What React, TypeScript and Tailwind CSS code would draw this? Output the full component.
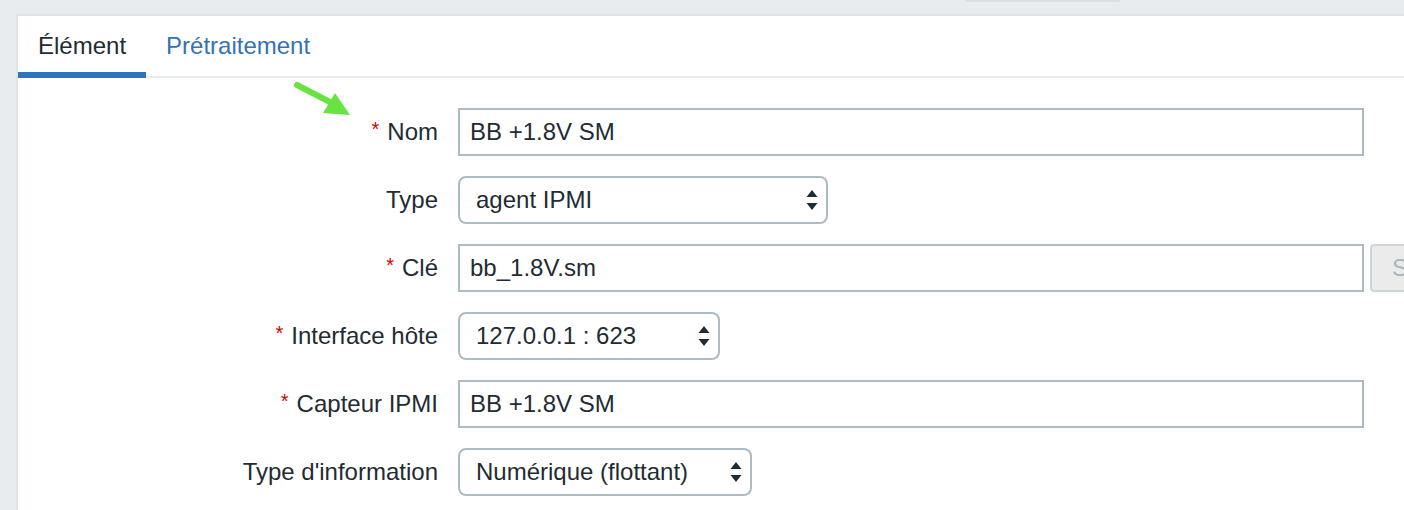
import React from "react";

const font = { fontFamily: '"Liberation Sans", Arial, sans-serif' };

function Arrows() {
  return (
    <svg width="12" height="22" viewBox="0 0 12 22" className="shrink-0">
      <polygon points="6,1 11.5,8 0.5,8" fill="#1f2c33" />
      <polygon points="6,21 11.5,14 0.5,14" fill="#1f2c33" />
    </svg>
  );
}

function Label({ text, req }: { text: string; req?: boolean }) {
  return (
    <div className="w-[420px] shrink-0 text-right pr-0 text-[24px] text-[#1f2c33] leading-none">
      {req && <span className="text-[#d40000] text-[20px] align-top mr-[8px] relative top-[-1px]">*</span>}
      {text}
    </div>
  );
}

function TextInput({ value }: { value: string }) {
  return (
    <div className="w-[906px] h-[48px] border-2 border-[#acbbc4] bg-white flex items-center pl-[10px] text-[24px] text-[#1f2c33] shrink-0">
      {value}
    </div>
  );
}

function Select({ value, w }: { value: string; w: string }) {
  return (
    <div className={`${w} h-[48px] border-2 border-[#acbbc4] rounded-[8px] bg-white flex items-center justify-between pl-[16px] pr-[8px] text-[24px] text-[#1f2c33] shrink-0`}>
      <span>{value}</span>
      <Arrows />
    </div>
  );
}

export default function App() {
  return (
    <div className="w-[1404px] h-[510px] overflow-hidden bg-[#e8ecef]" style={font}>
      <div className="h-[14px]">
        <div className="ml-[965px] w-[155px] h-[2px] bg-[#dadfe3] rounded-b-[2px]" />
      </div>
      <div className="ml-[16px] border-l-2 border-t-2 border-[#dfe4e7] bg-white w-[1420px] h-[520px]">
        <div className="flex border-b-2 border-[#e8ecef] h-[62px]">
          <div className="h-[62px] px-[20px] flex items-center border-b-[6px] border-[#3373b5] text-[24px] text-[#1f2c33] pt-[4px]">
            Élément
          </div>
          <div className="h-[62px] px-[20px] flex items-center text-[24px] text-[#3373b5] pb-[2px]">
            Prétraitement
          </div>
        </div>
        <div className="pt-[30px] flex flex-col gap-[20px]">
          <div className="flex items-center gap-[20px] h-[48px]">
            <Label text="Nom" req />
            <TextInput value="BB +1.8V SM" />
          </div>
          <div className="flex items-center gap-[20px] h-[48px]">
            <Label text="Type" />
            <Select value="agent IPMI" w="w-[370px]" />
          </div>
          <div className="flex items-center gap-[20px] h-[48px]">
            <Label text="Clé" req />
            <TextInput value="bb_1.8V.sm" />
            <div className="-ml-[14px] h-[48px] pl-[20px] pr-[12px] border-2 border-[#cfd6da] rounded-[4px] bg-[#ebebeb] flex items-center text-[24px] text-[#a9b7bf] shrink-0">
              Sélectionner
            </div>
          </div>
          <div className="flex items-center gap-[20px] h-[48px]">
            <Label text="Interface hôte" req />
            <Select value="127.0.0.1 : 623" w="w-[262px]" />
          </div>
          <div className="flex items-center gap-[20px] h-[48px]">
            <Label text="Capteur IPMI" req />
            <TextInput value="BB +1.8V SM" />
          </div>
          <div className="flex items-center gap-[20px] h-[48px]">
            <Label text="Type d'information" />
            <Select value="Numérique (flottant)" w="w-[294px]" />
          </div>
        </div>
      </div>
      <svg className="absolute left-[290px] top-[78px]" width="70" height="45" viewBox="0 0 70 45">
        <line x1="7" y1="7" x2="40" y2="24" stroke="#68e342" strokeWidth="6" strokeLinecap="round" />
        <polygon points="45,15 60,37 33,35" fill="#68e342" />
      </svg>
    </div>
  );
}
